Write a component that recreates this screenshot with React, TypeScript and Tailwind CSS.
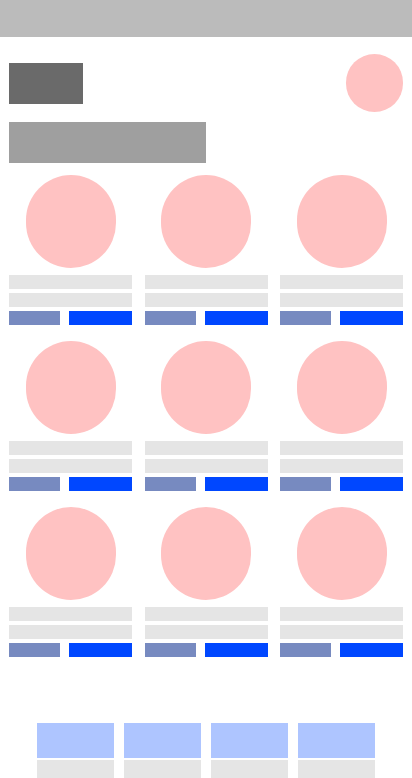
import React from "react";

function Card() {
  return (
    <div className="flex flex-col">
      <div className="flex justify-center">
        <div className="w-[90px] h-[93px] rounded-full bg-[#ffc2c2]" />
      </div>
      <div className="mt-[7px] h-[14px] bg-[#e5e5e5]" />
      <div className="mt-[4px] h-[14px] bg-[#e5e5e5]" />
      <div className="mt-[4px] flex justify-between">
        <div className="w-[51px] h-[14px] bg-[#778ac0]" />
        <div className="w-[63px] h-[14px] bg-[#0047ff]" />
      </div>
    </div>
  );
}

export default function App() {
  const cards = Array.from({ length: 9 });
  return (
    <div className="w-[412px] h-[778px] overflow-hidden bg-white" style={{ fontFamily: "'Liberation Sans', sans-serif" }}>
      <div className="h-[37px] bg-[#bbbbbb]" />
      <div className="px-[9px]">
        <div className="mt-[17px] flex items-center justify-between">
          <div className="w-[74px] h-[41px] bg-[#6a6a6a]" />
          <div className="w-[57px] h-[58px] rounded-full bg-[#ffc2c2]" />
        </div>
        <div className="mt-[10px] w-[197px] h-[41px] bg-[#9f9f9f]" />
        <div className="mt-[12px] grid grid-cols-3 gap-x-[12.5px] gap-y-[16px]">
          {cards.map((_, i) => (
            <Card key={i} />
          ))}
        </div>
      </div>
      <div className="mt-[66px] flex justify-center gap-[10px]">
        {[0, 1, 2, 3].map((i) => (
          <div key={i} className="w-[77px] flex flex-col gap-[2px]">
            <div className="h-[35px] bg-[#aec5ff]" />
            <div className="h-[30px] bg-[#e5e5e5]" />
          </div>
        ))}
      </div>
    </div>
  );
}
